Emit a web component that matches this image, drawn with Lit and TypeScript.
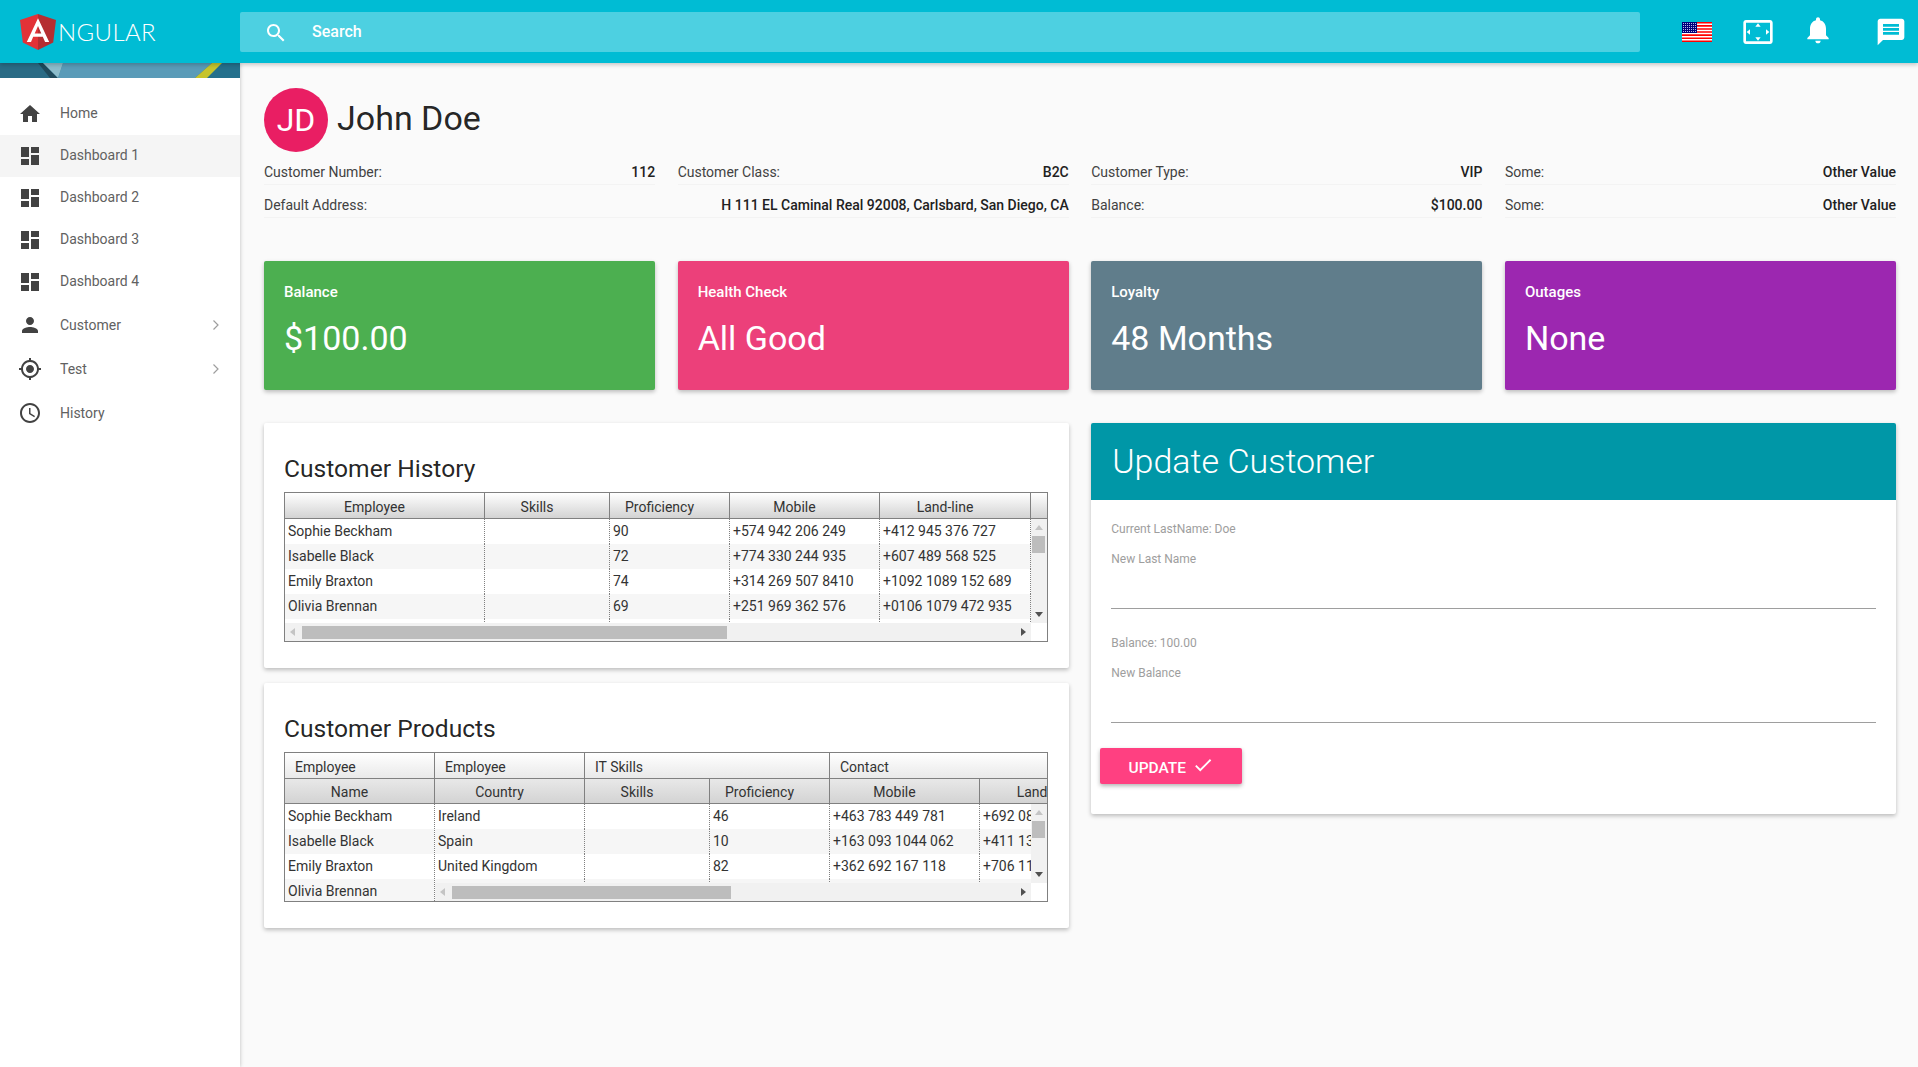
import { LitElement, html, css, svg } from 'lit';
import { customElement, property } from 'lit/decorators.js';

// Material icon paths, all on a 24x24 box
const ICONS: Record<string, string> = {
  home: 'M10 20v-6h4v6h5v-8h3L12 3 2 12h3v8z',
  dashboard: 'M3 13h8V3H3v10zm0 8h8v-6H3v6zm10 0h8V11h-8v10zm0-18v6h8V3h-8z',
  person: 'M12 12c2.21 0 4-1.79 4-4s-1.79-4-4-4-4 1.79-4 4 1.79 4 4 4zm0 2c-2.67 0-8 1.34-8 4v2h16v-2c0-2.66-5.33-4-8-4z',
  gps: 'M12 8c-2.21 0-4 1.79-4 4s1.79 4 4 4 4-1.79 4-4-1.79-4-4-4zm8.94 3c-.46-4.17-3.77-7.48-7.94-7.94V1h-2v2.06C6.83 3.52 3.52 6.83 3.06 11H1v2h2.06c.46 4.17 3.77 7.48 7.94 7.94V23h2v-2.06c4.17-.46 7.48-3.77 7.94-7.94H23v-2h-2.06zM12 19c-3.87 0-7-3.13-7-7s3.13-7 7-7 7 3.13 7 7-3.13 7-7 7z',
  time: 'M11.99 2C6.47 2 2 6.48 2 12s4.47 10 9.99 10C17.52 22 22 17.52 22 12S17.52 2 11.99 2zM12 20c-4.42 0-8-3.58-8-8s3.58-8 8-8 8 3.58 8 8-3.58 8-8 8zm.5-13H11v6l5.25 3.15.75-1.23-4.5-2.67z',
  search: 'M15.5 14h-.79l-.28-.27C15.41 12.59 16 11.11 16 9.5 16 5.91 13.09 3 9.5 3S3 5.91 3 9.5 5.91 16 9.5 16c1.61 0 3.09-.59 4.23-1.57l.27.28v.79l5 4.99L20.49 19l-4.99-5zm-6 0C7.01 14 5 11.99 5 9.5S7.01 5 9.5 5 14 7.01 14 9.5 11.99 14 9.5 14z',
  overscan: 'M12.01 5.5L10 8h4l-1.99-2.5zM18 10v4l2.5-1.99L18 10zM6 10l-2.5 2.01L6 14v-4zm8 6h-4l2.01 2.5L14 16zm7-13H3c-1.1 0-2 .9-2 2v14c0 1.1.9 2 2 2h18c1.1 0 2-.9 2-2V5c0-1.1-.9-2-2-2zm0 16.01H3V4.99h18v14.02z',
  bell: 'M12 22c1.1 0 2-.9 2-2h-4c0 1.1.89 2 2 2zm6-6v-5c0-3.07-1.64-5.64-4.5-6.32V4c0-.83-.67-1.5-1.5-1.5s-1.5.67-1.5 1.5v.68C7.63 5.36 6 7.92 6 11v5l-2 2v1h16v-1l-2-2z',
  message: 'M20 2H4c-1.1 0-1.99.9-1.99 2L2 22l4-4h14c1.1 0 2-.9 2-2V4c0-1.1-.9-2-2-2zm-2 12H6v-2h12v2zm0-3H6V9h12v2zm0-3H6V6h12v2z',
  check: 'M9 16.17L4.83 12l-1.41 1.41L9 19 21 7l-1.41-1.41z',
};

const icon = (name: string, size = 24) => html`<svg width=${size} height=${size} viewBox="0 0 24 24" fill="currentColor">${svg`<path d=${ICONS[name]}></path>`}</svg>`;

interface Column {
  title: string;
  width: number;
  key: string;
}

interface Group {
  title: string;
  width: number;
}

@customElement('data-grid')
export class DataGrid extends LitElement {
  static styles = css`
    :host {
      display: block;
      height: 150px;
      border: 1px solid #808080;
      box-sizing: border-box;
      overflow: hidden;
      font-size: 14px;
      color: #333;
      background: #fff;
    }
    .header {
      display: flex;
      flex-direction: column;
      background: linear-gradient(#fff, #d3d3d3);
      border-bottom: 1px solid #808080;
    }
    .head-row {
      display: flex;
      height: 25px;
      line-height: 28px;
      overflow: hidden;
    }
    .head-row + .head-row {
      box-sizing: border-box;
      border-top: 1px solid #808080;
      line-height: 26px;
    }
    .head-cell {
      flex: none;
      box-sizing: border-box;
      border-right: 1px solid #808080;
      padding-right: 20px;
      text-align: center;
      overflow: hidden;
      white-space: nowrap;
    }
    .head-cell.group {
      text-align: left;
      padding: 0 0 0 10px;
    }
    .head-cell.last {
      border-right: none;
      padding-right: 0;
    }
    .body {
      display: flex;
      height: 0;
      flex: 1;
    }
    .wrap {
      display: flex;
      flex-direction: column;
      height: 100%;
    }
    .frozen {
      flex: none;
      overflow: hidden;
      border-right: 1px dotted #808080;
      box-sizing: border-box;
    }
    .center {
      flex: 1;
      min-width: 0;
      display: flex;
      flex-direction: column;
    }
    .viewport {
      flex: 1;
      min-height: 0;
      overflow: hidden;
    }
    .row {
      display: flex;
      height: 25px;
      line-height: 25px;
    }
    .row.odd {
      background: #f6f6f6;
    }
    .cell {
      flex: none;
      box-sizing: border-box;
      padding-left: 3px;
      border-right: 1px dotted #808080;
      white-space: nowrap;
      overflow: hidden;
    }
    .frozen .cell {
      border-right: none;
    }
    /* Drawn scrollbars, as the screenshot has classic arrows */
    .hbar {
      flex: none;
      height: 18px;
      background: #f1f1f1;
      display: flex;
      align-items: center;
    }
    .vbar {
      flex: none;
      width: 16px;
      height: calc(100% - 18px);
      background: #f1f1f1;
      display: flex;
      flex-direction: column;
      align-items: center;
    }
    .thumb {
      background: #bdbdbd;
    }
    .hbar .thumb {
      height: 13px;
    }
    .vbar .thumb {
      width: 13px;
      height: 17px;
      flex: none;
    }
    .arrow {
      flex: none;
      width: 0;
      height: 0;
      border: 4px solid transparent;
    }
    .arrow.up {
      border-top-width: 0;
      border-bottom: 5px solid #c4c4c4;
      margin: 6px 0 6px;
    }
    .arrow.down {
      border-bottom-width: 0;
      border-top: 5px solid #505050;
      margin: auto 0 6px;
    }
    .arrow.left {
      border-left-width: 0;
      border-right: 5px solid #c4c4c4;
      margin: 0 4px 0 5px;
    }
    .arrow.right {
      border-right-width: 0;
      border-left: 5px solid #505050;
      margin: 0 5px 0 auto;
    }
  `;

  @property({ type: Array }) groups: Group[] = [];
  @property({ type: Array }) columns: Column[] = [];
  @property({ type: Array }) rows: Record<string, string>[] = [];
  @property({ type: Number }) frozen = 0;
  @property({ type: Number }) thumbStart = 0;
  @property({ type: Number }) thumbWidth = 0;

  private renderRow(row: Record<string, string>, cols: Column[], index: number) {
    return html`<div class="row ${index % 2 ? 'odd' : ''}">
      ${cols.map((c) => html`<div class="cell" style="width:${c.width}px">${row[c.key]}</div>`)}
    </div>`;
  }

  render() {
    const frozenCols = this.columns.slice(0, this.frozen);
    // The blank title column only sits above the vertical scrollbar
    const centerCols = this.columns.slice(this.frozen).filter((c) => c.title);
    const frozenWidth = frozenCols.reduce((sum, c) => sum + c.width, 0);
    return html`
      <div class="wrap">
        <div class="header">
          ${this.groups.length
            ? html`<div class="head-row">
                ${this.groups.map(
                  (g, i) => html`<div class="head-cell group ${i === this.groups.length - 1 ? 'last' : ''}" style="width:${g.width}px">${g.title}</div>`
                )}
              </div>`
            : ''}
          <div class="head-row">
            ${this.columns.map((c) => html`<div class="head-cell ${c.title ? '' : 'last'}" style="width:${c.width}px">${c.title}</div>`)}
          </div>
        </div>
        <div class="body">
          ${this.frozen
            ? html`<div class="frozen" style="width:${frozenWidth}px">
                ${this.rows.map((r, i) => this.renderRow(r, frozenCols, i))}
              </div>`
            : ''}
          <div class="center">
            <div class="viewport">
              ${(this.frozen ? this.rows.slice(0, 4) : this.rows).map((r, i) => this.renderRow(r, centerCols, i))}
            </div>
            <div class="hbar">
              <span class="arrow left"></span>
              <div class="thumb" style="margin-left:${this.thumbStart}px;width:${this.thumbWidth}px"></div>
              <span class="arrow right"></span>
            </div>
          </div>
          <div class="vbar">
            <span class="arrow up"></span>
            <div class="thumb"></div>
            <span class="arrow down"></span>
          </div>
        </div>
      </div>
    `;
  }
}

@customElement('app-root')
export class AppRoot extends LitElement {
  static styles = css`
    :host {
      display: block;
      height: 1067px;
      background: #fafafa;
      font-family: Roboto, "Liberation Sans", sans-serif;
      overflow: hidden;
    }
    .toolbar {
      position: relative;
      z-index: 2;
      height: 63px;
      display: flex;
      align-items: center;
      background: #00bcd4;
      color: #fff;
      box-shadow: 0 2px 4px rgba(0, 0, 0, 0.2);
    }
    .logo {
      flex: none;
      width: 240px;
      display: flex;
      align-items: center;
      padding-left: 20px;
      box-sizing: border-box;
    }
    .logo span {
      font-family: Lato, sans-serif;
      font-weight: 300;
      font-size: 24px;
      letter-spacing: 0.4px;
      margin-left: 2px;
    }
    .search {
      flex: none;
      width: 1400px;
      height: 40px;
      display: flex;
      align-items: center;
      box-sizing: border-box;
      padding-left: 24px;
      border-radius: 2px;
      background: rgba(255, 255, 255, 0.3);
      font-size: 16px;
      font-weight: 500;
      gap: 24px;
    }
    .search svg {
      margin-top: 2px;
    }
    .actions {
      flex: 1;
      display: flex;
      align-items: center;
      padding-left: 42px;
    }
    .flag {
      margin-right: 30px;
    }
    .actions .bell {
      margin: 0 41px 0 28px;
    }
    .layout {
      display: flex;
      height: 1004px;
    }
    .sidebar {
      flex: none;
      width: 240px;
      background: #fff;
      box-shadow: 0 0 4px rgba(0, 0, 0, 0.25);
      position: relative;
      z-index: 1;
      font-size: 14px;
      color: #616161;
    }
    .banner {
      display: block;
      width: 240px;
      height: 15px;
    }
    .menu {
      padding-top: 15px;
    }
    .item {
      height: 42px;
      display: flex;
      align-items: center;
      padding: 0 20px 0 18px;
      gap: 18px;
    }
    .item span {
      margin-bottom: 2px;
    }
    .item.tall {
      height: 44px;
    }
    .item.tall span {
      margin-bottom: 0;
    }
    .item.active {
      background: #f5f5f5;
    }
    .item svg {
      flex: none;
      color: #424242;
    }
    .item .chevron {
      margin-left: auto;
      color: #9e9e9e;
    }
    .content {
      flex: 1;
      min-width: 0;
      box-sizing: border-box;
      padding: 25px 22px 0 24px;
    }
    .identity {
      display: flex;
      align-items: center;
      gap: 9px;
      height: 64px;
    }
    .avatar {
      width: 64px;
      height: 64px;
      border-radius: 50%;
      background: #e91e63;
      color: #fff;
      font-size: 32px;
      display: flex;
      align-items: center;
      justify-content: center;
    }
    .identity h1 {
      margin: 0 0 5px;
      font-size: 34px;
      font-weight: 400;
      color: rgba(0, 0, 0, 0.87);
    }
    .info {
      display: grid;
      grid-template-columns: repeat(4, minmax(0, 1fr));
      column-gap: 22.5px;
      font-size: 14px;
      color: #424242;
    }
    .info > div {
      height: 25px;
      box-sizing: border-box;
      margin-top: 8px;
      border-bottom: 1px solid #f3f3f3;
      display: flex;
      justify-content: space-between;
      align-items: center;
    }
    .info .wide {
      grid-column: span 2;
    }
    .info b {
      font-weight: 500;
      color: #212121;
    }
    .stats {
      display: grid;
      grid-template-columns: repeat(4, minmax(0, 1fr));
      column-gap: 22.5px;
      margin-top: 43px;
    }
    .stat {
      height: 129px;
      box-sizing: border-box;
      padding: 22px 20px 0;
      border-radius: 2px;
      color: #fff;
      box-shadow: 0 2px 4px rgba(0, 0, 0, 0.25);
    }
    .stat label {
      display: block;
      font-size: 15px;
      font-weight: 500;
      line-height: 18px;
    }
    .stat div {
      font-size: 34px;
      line-height: 44px;
      margin-top: 15px;
    }
    .columns {
      display: grid;
      grid-template-columns: repeat(2, minmax(0, 1fr));
      column-gap: 22.5px;
      margin-top: 33px;
      align-items: start;
    }
    .stack {
      display: flex;
      flex-direction: column;
      gap: 15px;
    }
    .card {
      background: #fff;
      border-radius: 2px;
      box-shadow: 0 2px 4px rgba(0, 0, 0, 0.25);
    }
    .card.table {
      height: 245px;
      box-sizing: border-box;
      padding: 31px 21px 0 20px;
    }
    .card h2 {
      margin: 0 0 8px;
      font-size: 24.6px;
      font-weight: 400;
      line-height: 30px;
      color: rgba(0, 0, 0, 0.87);
    }
    .form-head {
      height: 77px;
      display: flex;
      align-items: center;
      padding-left: 21px;
      padding-bottom: 2px;
      box-sizing: border-box;
      background: #0097a7;
      color: #fff;
      font-size: 34px;
      font-weight: 300;
      border-radius: 2px 2px 0 0;
    }
    .form {
      height: 314px;
      box-sizing: border-box;
      padding: 22px 20px 0;
      font-size: 12px;
      color: #9e9e9e;
    }
    .form p {
      margin: 0;
      line-height: 14px;
    }
    .form .field {
      margin-top: 16px;
      height: 56px;
      line-height: 14px;
      border-bottom: 1px solid #9e9e9e;
    }
    .form .gap {
      margin-top: 27px;
    }
    .update {
      display: flex;
      align-items: center;
      justify-content: center;
      gap: 6px;
      width: 142px;
      height: 36px;
      margin: 25px 0 0 -11px;
      padding: 0;
      border: none;
      border-radius: 2px;
      background: #ff4081;
      color: #fff;
      font: 500 15.5px Roboto, sans-serif;
      box-shadow: 0 2px 4px rgba(0, 0, 0, 0.3);
    }
    .update span {
      margin-top: 4px;
    }
    .update svg {
      margin-top: -2px;
    }
  `;

  // Sidebar entries
  private menu = [
    { name: 'Home', icon: 'home' },
    { name: 'Dashboard 1', icon: 'dashboard', active: true },
    { name: 'Dashboard 2', icon: 'dashboard' },
    { name: 'Dashboard 3', icon: 'dashboard' },
    { name: 'Dashboard 4', icon: 'dashboard' },
    { name: 'Customer', icon: 'person', more: true },
    { name: 'Test', icon: 'gps', more: true },
    { name: 'History', icon: 'time', tall: true },
  ];

  private stats = [
    { label: 'Balance', value: '$100.00', color: '#4caf50' },
    { label: 'Health Check', value: 'All Good', color: '#ec407a' },
    { label: 'Loyalty', value: '48 Months', color: '#607d8b' },
    { label: 'Outages', value: 'None', color: '#9c27b0' },
  ];

  private historyColumns: Column[] = [
    { title: 'Employee', width: 200, key: 'name' },
    { title: 'Skills', width: 125, key: 'skills' },
    { title: 'Proficiency', width: 120, key: 'prof' },
    { title: 'Mobile', width: 150, key: 'mobile' },
    { title: 'Land-line', width: 151, key: 'land' },
    { title: '', width: 16, key: 'none' },
  ];

  private historyRows = [
    { name: 'Sophie Beckham', skills: '', prof: '90', mobile: '+574 942 206 249', land: '+412 945 376 727' },
    { name: 'Isabelle Black', skills: '', prof: '72', mobile: '+774 330 244 935', land: '+607 489 568 525' },
    { name: 'Emily Braxton', skills: '', prof: '74', mobile: '+314 269 507 8410', land: '+1092 1089 152 689' },
    { name: 'Olivia Brennan', skills: '', prof: '69', mobile: '+251 969 362 576', land: '+0106 1079 472 935' },
    { name: '', skills: '', prof: '', mobile: '', land: '' },
  ];

  private productGroups: Group[] = [
    { title: 'Employee', width: 150 },
    { title: 'Employee', width: 150 },
    { title: 'IT Skills', width: 245 },
    { title: 'Contact', width: 217 },
  ];

  private productColumns: Column[] = [
    { title: 'Name', width: 150, key: 'name' },
    { title: 'Country', width: 150, key: 'country' },
    { title: 'Skills', width: 125, key: 'skills' },
    { title: 'Proficiency', width: 120, key: 'prof' },
    { title: 'Mobile', width: 150, key: 'mobile' },
    { title: 'Land-line', width: 151, key: 'land' },
  ];

  private productRows = [
    { name: 'Sophie Beckham', country: 'Ireland', skills: '', prof: '46', mobile: '+463 783 449 781', land: '+692 087 314 220' },
    { name: 'Isabelle Black', country: 'Spain', skills: '', prof: '10', mobile: '+163 093 1044 062', land: '+411 139 682 405' },
    { name: 'Emily Braxton', country: 'United Kingdom', skills: '', prof: '82', mobile: '+362 692 167 118', land: '+706 117 459 302' },
    { name: 'Olivia Brennan', country: '', skills: '', prof: '', mobile: '', land: '' },
  ];

  render() {
    return html`
      <header class="toolbar">
        <div class="logo">
          <svg width="36" height="36" viewBox="0 0 36 38" preserveAspectRatio="none">
            <path d="M18 0L0 6.4l2.8 23.7L18 38z" fill="#e23237"></path>
            <path d="M18 0l18 6.4-2.8 23.7L18 38z" fill="#b52e31"></path>
            <path d="M18 4.5L6.8 29.6h4.2l2.2-5.6h9.6l2.3 5.6h4.1zm3.3 16H14.7L18 12.6z" fill="#fff"></path>
          </svg>
          <span>NGULAR</span>
        </div>
        <div class="search">${icon('search')}<span>Search</span></div>
        <div class="actions">
          <svg class="flag" width="30" height="20" viewBox="0 0 30 20">
            <rect width="30" height="20" fill="#f00"></rect>
            <path d="M0 2.3h30M0 5.4h30M0 8.5h30M0 11.6h30M0 14.7h30M0 17.8h30" stroke="#fff" stroke-width="1.5"></path>
            <rect width="15" height="11" fill="#00007a"></rect>
            <path d="M1 1.5h13M1 3.5h13M1 5.5h13M1 7.5h13M1 9.5h13" stroke="#b9b9e6" stroke-width="1" stroke-dasharray="1 1"></path>
          </svg>
          ${icon('overscan', 32)}
          <span class="bell">${icon('bell', 32)}</span>
          ${icon('message', 32)}
        </div>
      </header>
      <div class="layout">
        <aside class="sidebar">
          <svg class="banner" viewBox="0 0 240 15" preserveAspectRatio="none">
            <rect width="240" height="15" fill="#25708c"></rect>
            <polygon points="0,0 40,0 52,15 0,15" fill="#2a6b85"></polygon>
            <polygon points="63,0 212,0 195,15 58,15" fill="#5a9bb8"></polygon>
            <polygon points="38,0 43,0 58,15 50,15" fill="#1f4a5c"></polygon>
            <polygon points="43,0 63,0 58,15" fill="#8cbccb"></polygon>
            <polygon points="212,0 222,0 207,15 195,15" fill="#c6c42c"></polygon>
          </svg>
          <nav class="menu">
            ${this.menu.map(
              (m) => html`<div class="item ${m.active ? 'active' : ''} ${m.more || m.tall ? 'tall' : ''}">
                ${icon(m.icon)}
                <span>${m.name}</span>
                ${m.more
                  ? html`<svg class="chevron" width="8" height="12" viewBox="0 0 8 12" fill="none" stroke="currentColor" stroke-width="1.2"><path d="M1.5 1.5L6 6l-4.5 4.5"></path></svg>`
                  : ''}
              </div>`
            )}
          </nav>
        </aside>
        <main class="content">
          <div class="identity">
            <div class="avatar">JD</div>
            <h1>John Doe</h1>
          </div>
          <section class="info">
            <div><span>Customer Number:</span><b>112</b></div>
            <div><span>Customer Class:</span><b>B2C</b></div>
            <div><span>Customer Type:</span><b>VIP</b></div>
            <div><span>Some:</span><b>Other Value</b></div>
            <div class="wide"><span>Default Address:</span><b>H 111 EL Caminal Real 92008, Carlsbard, San Diego, CA</b></div>
            <div><span>Balance:</span><b>$100.00</b></div>
            <div><span>Some:</span><b>Other Value</b></div>
          </section>
          <section class="stats">
            ${this.stats.map(
              (s) => html`<div class="stat" style="background:${s.color}"><label>${s.label}</label><div>${s.value}</div></div>`
            )}
          </section>
          <section class="columns">
            <div class="stack">
              <div class="card table">
                <h2>Customer History</h2>
                <data-grid .columns=${this.historyColumns} .rows=${this.historyRows} .thumbStart=${3} .thumbWidth=${425}></data-grid>
              </div>
              <div class="card table">
                <h2>Customer Products</h2>
                <data-grid .groups=${this.productGroups} .columns=${this.productColumns} .rows=${this.productRows} .frozen=${1} .thumbStart=${3} .thumbWidth=${279}></data-grid>
              </div>
            </div>
            <div class="card">
              <div class="form-head">Update Customer</div>
              <div class="form">
                <p>Current LastName: Doe</p>
                <div class="field">New Last Name</div>
                <p class="gap">Balance: 100.00</p>
                <div class="field">New Balance</div>
                <button class="update"><span>UPDATE</span>${icon('check', 22)}</button>
              </div>
            </div>
          </section>
        </main>
      </div>
    `;
  }
}

declare global {
  interface HTMLElementTagNameMap {
    'app-root': AppRoot;
    'data-grid': DataGrid;
  }
}
